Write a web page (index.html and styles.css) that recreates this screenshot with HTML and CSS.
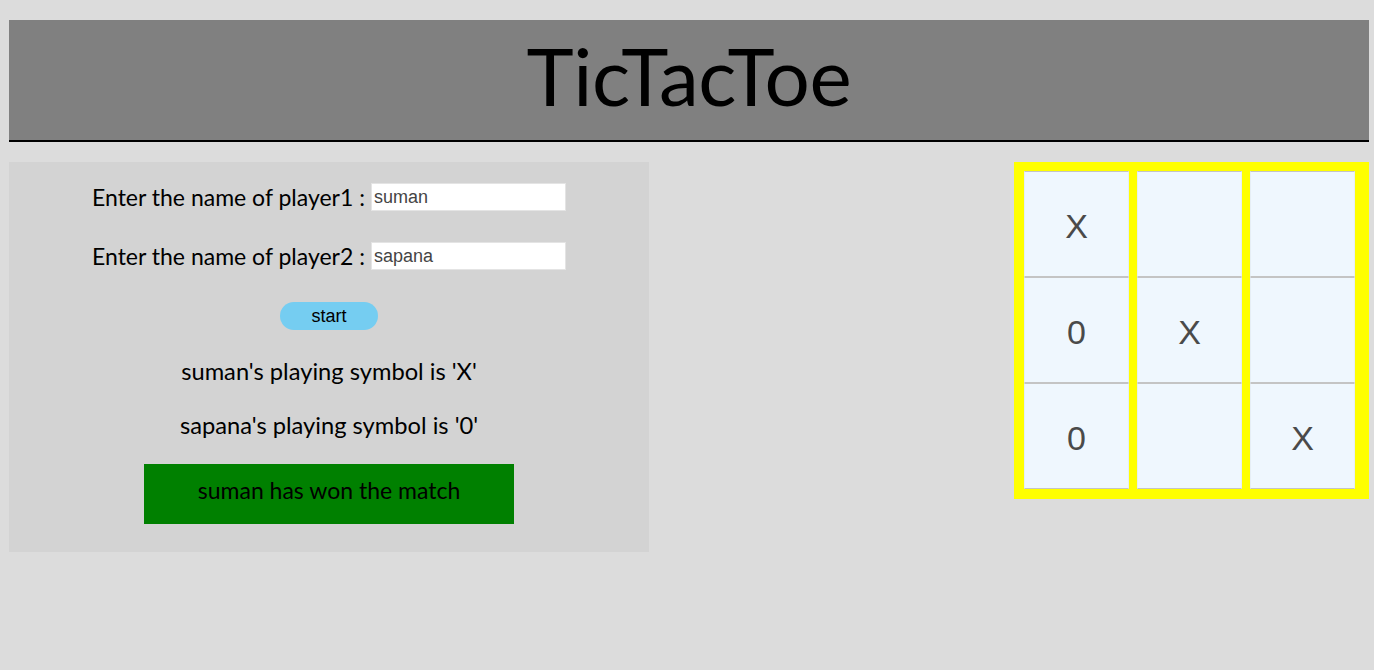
FILE: index.html
```html
<!DOCTYPE html>
<html lang="en">
<head>
<meta charset="utf-8">
<title>TicTacToe</title>
<link rel="stylesheet" href="styles.css">
</head>
<body>
<header class="topbar">
  <h1 class="title">TicTacToe</h1>
</header>
<main class="main">
  <section class="panel">
    <div class="field field-first">
      <label class="field-label" for="p1">Enter the name of player1 :</label>
      <input class="field-input" id="p1" type="text" value="suman">
    </div>
    <div class="field field-second">
      <label class="field-label" for="p2">Enter the name of player2 :</label>
      <input class="field-input" id="p2" type="text" value="sapana">
    </div>
    <button class="start-btn" type="button">start</button>
    <p class="symbol symbol-first">suman's playing symbol is 'X'</p>
    <p class="symbol symbol-second">sapana's playing symbol is '0'</p>
    <div class="result">suman has won the match</div>
  </section>
  <section class="board">
    <div class="cell">X</div>
    <div class="cell"></div>
    <div class="cell"></div>
    <div class="cell">0</div>
    <div class="cell">X</div>
    <div class="cell"></div>
    <div class="cell">0</div>
    <div class="cell"></div>
    <div class="cell">X</div>
  </section>
</main>
</body>
</html>
```

FILE: styles.css
```css
html, body {
  margin: 0;
  background: #dcdcdc;
}
body {
  padding: 20px 5px 0 9px;
  height: 670px;
  box-sizing: border-box;
  font-family: "Lato", "Open Sans", sans-serif;
  color: #000;
}
.topbar {
  height: 120px;
  background: #808080;
  border-bottom: 2px solid #000;
  display: flex;
  align-items: center;
  justify-content: center;
}
.title {
  margin: 0;
  font-family: "Lato", sans-serif;
  font-weight: 400;
  font-size: 80px;
  line-height: 1;
  letter-spacing: -0.4px;
  transform: translateY(-5px);
}
.main {
  margin-top: 20px;
  display: flex;
  justify-content: space-between;
  align-items: flex-start;
}
.panel {
  width: 640px;
  height: 390px;
  background: #d3d3d3;
  display: flex;
  flex-direction: column;
  align-items: center;
}
.field {
  display: flex;
  align-items: center;
  height: 28px;
}
.field-first { margin-top: 21px; }
.field-second { margin-top: 31px; }
.field-label {
  font-size: 23px;
  margin-right: 6px;
}
.field-input {
  width: 195px;
  height: 28px;
  box-sizing: border-box;
  border: 1px solid #e4e4e4;
  background: #fff;
  padding: 0 2px;
  font-family: "Liberation Sans", Arial, sans-serif;
  font-size: 18px;
  color: #444;
  outline: none;
}
.start-btn {
  margin-top: 32px;
  width: 98px;
  height: 28px;
  border: none;
  border-radius: 14px;
  background: #75cdf1;
  font-family: "Liberation Sans", Arial, sans-serif;
  font-size: 18px;
  color: #000;
  padding: 0;
}
.symbol {
  margin: 0;
  font-size: 23.7px;
  line-height: 28px;
}
.symbol-first { margin-top: 27px; }
.symbol-second { margin-top: 26px; }
.result {
  margin-top: 25px;
  width: 370px;
  height: 60px;
  background: #008000;
  font-size: 23px;
  line-height: 52px;
  text-align: center;
}
.board {
  width: 355px;
  box-sizing: border-box;
  padding: 9px 14px 10px 10px;
  background: #ffff00;
  display: grid;
  grid-template-columns: repeat(3, 105px);
  column-gap: 8px;
}
.cell {
  height: 106px;
  box-sizing: border-box;
  border: 1px solid #c4c4c4;
  border-left-color: #e6eef5;
  border-right-color: #e6eef5;
  background: #eff7fe;
  display: flex;
  align-items: center;
  justify-content: center;
  font-family: "Liberation Sans", Arial, sans-serif;
  font-size: 34px;
  color: #4a4a4a;
  padding-top: 4px;
}
```
